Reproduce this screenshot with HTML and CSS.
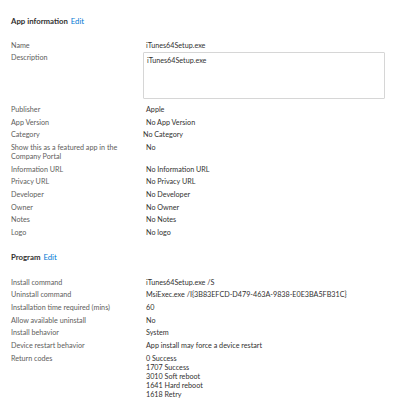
FILE: index.html
```html
<!DOCTYPE html>
<html>
    <head>
        <title>App properties</title>
        <meta name="viewport" content="width=device-width, initial-scale=1">
        <link rel="stylesheet" href="styles.css">
    </head>

    <body>
        <div class="page">
            <div class="section-title">App information <a class="edit">Edit</a></div>
            <div class="props">
                <div class="label">Name</div><div class="value">iTunes64Setup.exe</div>
                <div class="label">Description</div>
                <div class="value"><div class="desc-box">iTunes64Setup.exe</div></div>
                <div class="label">Publisher</div><div class="value">Apple</div>
                <div class="label">App Version</div><div class="value">No App Version</div>
                <div class="label">Category</div><div class="value shifted">No Category</div>
                <div class="label">Show this as a featured app in the<br>Company Portal</div><div class="value">No</div>
                <div class="label">Information URL</div><div class="value">No Information URL</div>
                <div class="label">Privacy URL</div><div class="value">No Privacy URL</div>
                <div class="label">Developer</div><div class="value">No Developer</div>
                <div class="label">Owner</div><div class="value">No Owner</div>
                <div class="label">Notes</div><div class="value">No Notes</div>
                <div class="label">Logo</div><div class="value">No logo</div>
            </div>

            <div class="section-title">Program <a class="edit">Edit</a></div>
            <div class="props">
                <div class="label">Install command</div><div class="value">iTunes64Setup.exe /S</div>
                <div class="label">Uninstall command</div><div class="value">MsiExec.exe /I{3B83EFCD-D479-463A-9838-E0E3BA5FB31C}</div>
                <div class="label">Installation time required (mins)</div><div class="value">60</div>
                <div class="label">Allow available uninstall</div><div class="value">No</div>
                <div class="label">Install behavior</div><div class="value">System</div>
                <div class="label">Device restart behavior</div><div class="value">App install may force a device restart</div>
                <div class="label">Return codes</div>
                <div class="value">0 Success<br>1707 Success<br>3010 Soft reboot<br>1641 Hard reboot<br>1618 Retry</div>
            </div>
        </div>
    </body>
</html>
```

FILE: styles.css
```css
body {
    margin: 0;
    padding: 0;
    background: #fff;
    font-family: "Segoe UI", Lato, "Open Sans", Arial, sans-serif;
    font-size: 7.2px;
    line-height: 9px;
    color: #323130;
}

.page {
    padding: 17px 11px 0 11px;
}

.section-title {
    font-weight: 700;
    font-size: 7.8px;
    margin-bottom: 14.5px;
}

.props + .section-title {
    margin-bottom: 15.5px;
}

.edit {
    font-weight: 400;
    color: #0078d4;
    margin-left: 1px;
}

.props {
    display: grid;
    grid-template-columns: 135px 1fr;
    row-gap: 3.7px;
    margin-bottom: 16px;
}

.label {
    color: #605e5c;
}

.value {
    color: #323130;
}

.value.shifted {
    margin-left: -3px;
}

.desc-box {
    margin: -1px 0 2px -3px;
    height: 39px;
    width: 234px;
    padding: 3px 3px;
    border: 1px solid #d6d6d6;
    border-radius: 1px;
}
```
